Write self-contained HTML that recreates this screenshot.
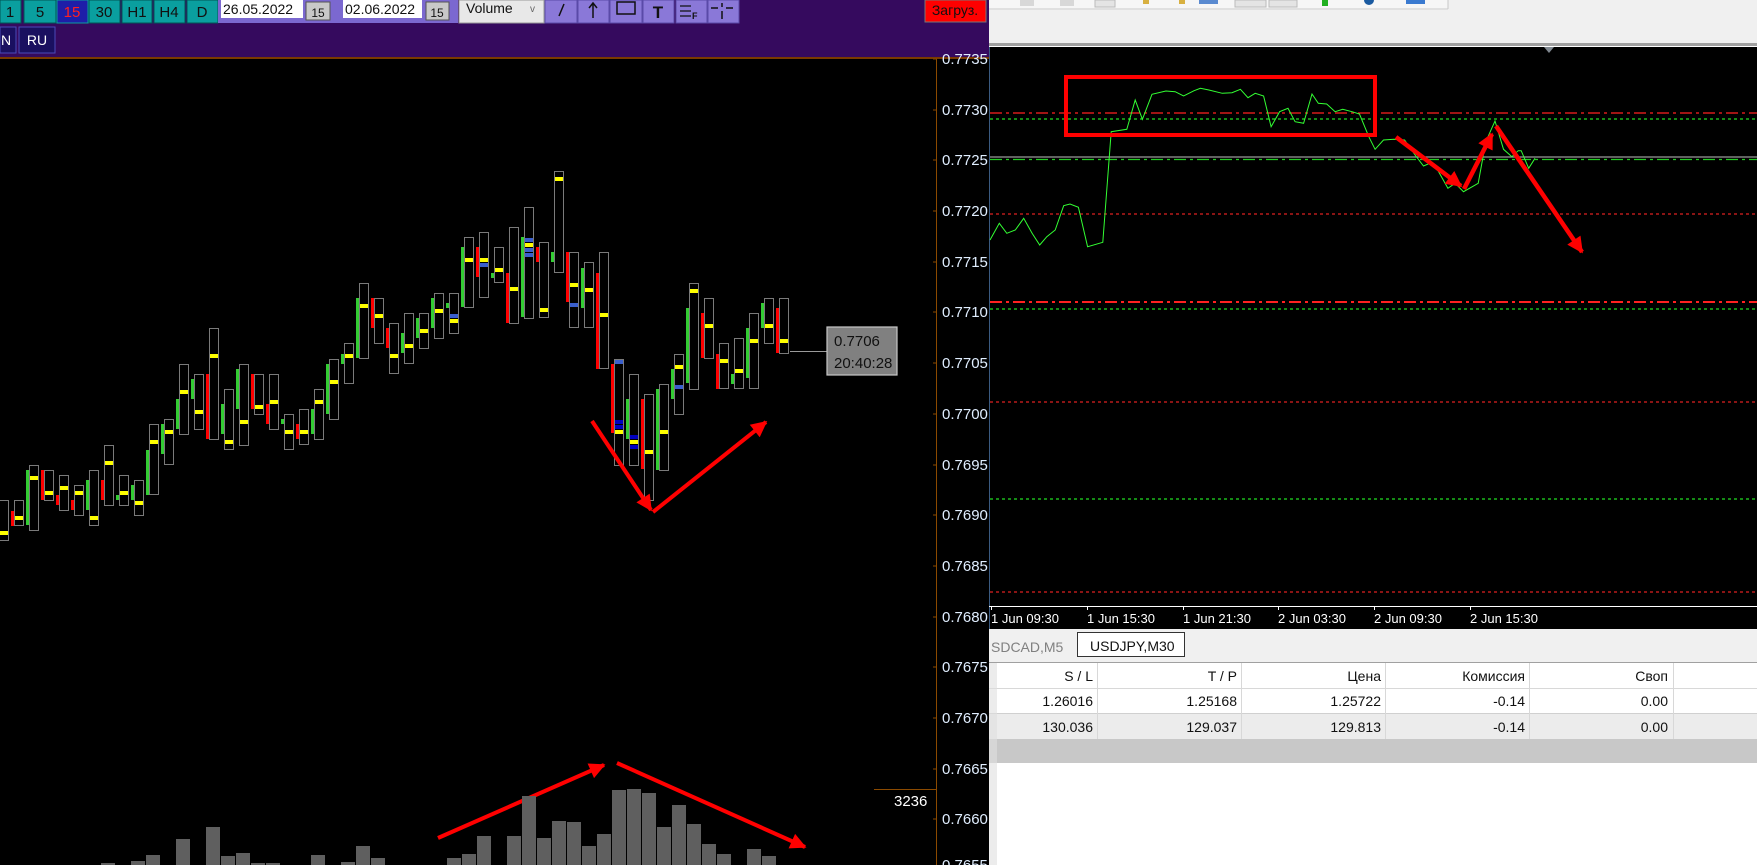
<!DOCTYPE html>
<html><head><meta charset="utf-8"><style>
html,body{margin:0;padding:0;background:#000;overflow:hidden}
svg{display:block}
text{font-family:"Liberation Sans","DejaVu Sans",sans-serif}
</style></head><body>
<svg width="1757" height="865" viewBox="0 0 1757 865" xmlns="http://www.w3.org/2000/svg">
<defs>
<marker id="ah" viewBox="0 0 10 10" refX="9" refY="5" markerWidth="22" markerHeight="16" markerUnits="userSpaceOnUse" orient="auto"><path d="M0,0 L10,5 L0,10 Z" fill="#ff0000"/></marker>
</defs>
<rect x="0" y="0" width="1757" height="865" fill="#000"/>
<!-- LEFT TOP PURPLE TOOLBAR -->
<rect x="0" y="0" width="989" height="57" fill="#350a5e"/>
<rect x="0" y="57" width="989" height="2" fill="#7a3a00"/>
<g font-size="15" fill="#111" text-anchor="middle">
<rect x="0" y="0" width="21" height="23" fill="#0a9f9f" stroke="#055" stroke-width="1"/><text x="10" y="17">1</text>
<rect x="24" y="0" width="32" height="23" fill="#0a9f9f" stroke="#055"/><text x="40" y="17">5</text>
<rect x="57" y="0" width="31" height="23" fill="#1e1ea8" stroke="#0a9f9f"/><text x="72" y="17" fill="#ff2020">15</text>
<rect x="89" y="0" width="31" height="23" fill="#0a9f9f" stroke="#055"/><text x="104" y="17">30</text>
<rect x="122" y="0" width="30" height="23" fill="#0a9f9f" stroke="#055"/><text x="137" y="17">H1</text>
<rect x="154" y="0" width="31" height="23" fill="#0a9f9f" stroke="#055"/><text x="169" y="17">H4</text>
<rect x="187" y="0" width="31" height="23" fill="#0a9f9f" stroke="#055"/><text x="202" y="17">D</text>
</g>
<rect x="218" y="0" width="121" height="23" fill="#7b68d0"/>
<rect x="221" y="0" width="82" height="18" fill="#fff"/>
<text x="223" y="14" font-size="14" fill="#111">26.05.2022</text>
<rect x="306" y="2" width="24" height="18" fill="#c8c8c8" stroke="#555"/>
<text x="318" y="17" font-size="12" fill="#111" text-anchor="middle">15</text>
<rect x="339" y="0" width="119" height="23" fill="#7b68d0"/>
<rect x="343" y="0" width="79" height="18" fill="#fff"/>
<text x="345" y="14" font-size="14" fill="#111">02.06.2022</text>
<rect x="426" y="2" width="23" height="18" fill="#c8c8c8" stroke="#555"/>
<text x="437" y="17" font-size="12" fill="#111" text-anchor="middle">15</text>
<rect x="459" y="0" width="85" height="23" fill="#e8e8e8" stroke="#999"/>
<text x="466" y="13" font-size="14" fill="#111">Volume</text>
<text x="530" y="12" font-size="10" fill="#666">v</text>
<g fill="#8a78d8" stroke="#5a4aa8">
<rect x="545" y="0" width="32" height="23"/><rect x="578" y="0" width="31" height="23"/><rect x="610" y="0" width="32" height="23"/><rect x="643" y="0" width="31" height="23"/><rect x="676" y="0" width="31" height="23"/><rect x="708" y="0" width="31" height="23"/>
</g>
<path d="M559,16 L564,4" stroke="#111" stroke-width="1.5"/>
<path d="M593,18 L593,4 M589,8 L593,3 L597,8" stroke="#111" stroke-width="1.5" fill="none"/>
<rect x="617" y="2" width="18" height="12" fill="none" stroke="#111" stroke-width="1.5"/>
<text x="658" y="18" font-size="17" font-weight="bold" fill="#111" text-anchor="middle">T</text>
<path d="M680,6 h11 M680,11 h11 M680,16 h11" stroke="#111" stroke-width="1.2"/><text x="692" y="19" font-size="9" font-weight="bold" fill="#111">F</text>
<path d="M711,8 h7 M726,8 h7 M722,3 v4 M722,11 v8" stroke="#111" stroke-width="1.5"/>
<rect x="925" y="0" width="61" height="22" fill="#ff0000" stroke="#777"/>
<text x="955" y="15" font-size="14" fill="#111" text-anchor="middle">Загруз.</text>
<rect x="0" y="27" width="16" height="26" fill="#1a1060" stroke="#4a4ab8"/><text x="1" y="45" font-size="14" fill="#fff">N</text>
<rect x="19" y="27" width="36" height="26" fill="#1a1060" stroke="#4a4ab8"/><text x="37" y="45" font-size="14" fill="#fff" text-anchor="middle">RU</text>
<!-- LEFT AXIS -->
<line x1="936.5" y1="59" x2="936.5" y2="865" stroke="#8b4a00" stroke-width="1"/>
<g font-size="15" fill="#e0eeff" stroke="none">
<text x="942" y="64">0.7735</text><text x="942" y="115">0.7730</text><text x="942" y="165">0.7725</text><text x="942" y="216">0.7720</text><text x="942" y="267">0.7715</text><text x="942" y="317">0.7710</text><text x="942" y="368">0.7705</text><text x="942" y="419">0.7700</text><text x="942" y="470">0.7695</text><text x="942" y="520">0.7690</text><text x="942" y="571">0.7685</text><text x="942" y="622">0.7680</text><text x="942" y="672">0.7675</text><text x="942" y="723">0.7670</text><text x="942" y="774">0.7665</text><text x="942" y="824">0.7660</text><text x="942" y="870">0.7655</text>
</g>
<g stroke="#8b4a00"><path d="M933,59h4M933,110h4M933,160h4M933,211h4M933,262h4M933,312h4M933,363h4M933,414h4M933,465h4M933,515h4M933,566h4M933,617h4M933,667h4M933,718h4M933,769h4M933,819h4"/></g>
<line x1="874" y1="789.5" x2="936" y2="789.5" stroke="#8b4a00"/>
<text x="894" y="806" font-size="15" fill="#fff">3236</text>
<!-- CANDLES -->
<g id="c">
<g fill="#33cc33">
<rect x="26" y="470" width="3" height="55"/><rect x="86" y="480" width="3" height="30"/><rect x="116" y="495" width="3" height="5"/><rect x="131" y="485" width="3" height="15"/><rect x="146" y="450" width="3" height="45"/><rect x="161" y="424" width="3" height="30"/><rect x="176" y="399" width="3" height="30"/><rect x="191" y="379" width="3" height="20"/><rect x="221" y="404" width="3" height="30"/><rect x="236" y="369" width="3" height="40"/><rect x="281" y="419" width="3" height="5"/><rect x="311" y="409" width="3" height="25"/><rect x="326" y="364" width="3" height="50"/><rect x="341" y="354" width="3" height="10"/><rect x="356" y="298" width="3" height="60"/><rect x="401" y="333" width="3" height="20"/><rect x="416" y="318" width="3" height="20"/><rect x="431" y="298" width="3" height="30"/><rect x="446" y="303" width="3" height="5"/><rect x="461" y="247" width="3" height="60"/><rect x="491" y="273" width="3" height="5"/><rect x="521" y="237" width="3" height="80"/><rect x="551" y="252" width="3" height="10"/><rect x="581" y="268" width="3" height="40"/><rect x="626" y="399" width="3" height="40"/><rect x="656" y="389" width="3" height="81"/><rect x="671" y="369" width="3" height="30"/><rect x="686" y="308" width="3" height="75"/><rect x="731" y="374" width="3" height="10"/><rect x="746" y="328" width="3" height="50"/><rect x="761" y="303" width="3" height="25"/>
</g>
<g fill="#ff0000">
<rect x="11" y="511" width="3" height="15"/><rect x="41" y="470" width="3" height="30"/><rect x="56" y="495" width="3" height="10"/><rect x="71" y="500" width="3" height="10"/><rect x="101" y="480" width="3" height="20"/><rect x="206" y="374" width="3" height="65"/><rect x="251" y="374" width="3" height="35"/><rect x="266" y="404" width="3" height="20"/><rect x="296" y="424" width="3" height="15"/><rect x="371" y="298" width="3" height="30"/><rect x="386" y="328" width="3" height="20"/><rect x="476" y="247" width="3" height="30"/><rect x="506" y="273" width="3" height="50"/><rect x="536" y="247" width="3" height="15"/><rect x="566" y="252" width="3" height="50"/><rect x="596" y="273" width="3" height="96"/><rect x="611" y="364" width="3" height="69"/><rect x="641" y="399" width="3" height="70"/><rect x="701" y="313" width="3" height="45"/><rect x="716" y="354" width="3" height="35"/><rect x="776" y="308" width="3" height="45"/>
</g>
<g fill="none" stroke="#7a7a7a" stroke-width="1">
<rect x="-0.5" y="500.5" width="9" height="40"/><rect x="14.5" y="500.5" width="9" height="25"/><rect x="29.5" y="465.5" width="9" height="65"/><rect x="44.5" y="470.5" width="9" height="30"/><rect x="59.5" y="475.5" width="9" height="35"/><rect x="74.5" y="485.5" width="9" height="30"/><rect x="89.5" y="470.5" width="9" height="55"/><rect x="104.5" y="445.5" width="9" height="60"/><rect x="119.5" y="475.5" width="9" height="30"/><rect x="134.5" y="480.5" width="9" height="35"/><rect x="149.5" y="424.5" width="9" height="70"/><rect x="164.5" y="419.5" width="9" height="45"/><rect x="179.5" y="364.5" width="9" height="70"/><rect x="194.5" y="374.5" width="9" height="55"/><rect x="209.5" y="328.5" width="9" height="111"/><rect x="224.5" y="389.5" width="9" height="60"/><rect x="239.5" y="364.5" width="9" height="81"/><rect x="254.5" y="374.5" width="9" height="40"/><rect x="269.5" y="374.5" width="9" height="55"/><rect x="284.5" y="414.5" width="9" height="35"/><rect x="299.5" y="409.5" width="9" height="35"/><rect x="314.5" y="389.5" width="9" height="50"/><rect x="329.5" y="359.5" width="9" height="60"/><rect x="344.5" y="343.5" width="9" height="40"/><rect x="359.5" y="283.5" width="9" height="75"/><rect x="374.5" y="298.5" width="9" height="45"/><rect x="389.5" y="323.5" width="9" height="50"/><rect x="404.5" y="313.5" width="9" height="50"/><rect x="419.5" y="313.5" width="9" height="35"/><rect x="434.5" y="293.5" width="9" height="45"/><rect x="449.5" y="293.5" width="9" height="40"/><rect x="464.5" y="237.5" width="9" height="70"/><rect x="479.5" y="232.5" width="9" height="65"/><rect x="494.5" y="247.5" width="9" height="35"/><rect x="509.5" y="227.5" width="9" height="96"/><rect x="524.5" y="207.5" width="9" height="111"/><rect x="539.5" y="242.5" width="9" height="75"/><rect x="554.5" y="171.5" width="9" height="101"/><rect x="569.5" y="252.5" width="9" height="75"/><rect x="584.5" y="262.5" width="9" height="65"/><rect x="599.5" y="252.5" width="9" height="116"/><rect x="614.5" y="359.5" width="9" height="106"/><rect x="629.5" y="374.5" width="9" height="91"/><rect x="644.5" y="394.5" width="9" height="106"/><rect x="659.5" y="384.5" width="9" height="86"/><rect x="674.5" y="354.5" width="9" height="60"/><rect x="689.5" y="283.5" width="9" height="106"/><rect x="704.5" y="298.5" width="9" height="60"/><rect x="719.5" y="343.5" width="9" height="45"/><rect x="734.5" y="338.5" width="9" height="50"/><rect x="749.5" y="313.5" width="9" height="75"/><rect x="764.5" y="298.5" width="9" height="45"/><rect x="779.5" y="298.5" width="9" height="55"/>
</g>
<g fill="#3a5fcd">
<rect x="450" y="314" width="8" height="4"/><rect x="480" y="263" width="8" height="4"/><rect x="525" y="238" width="8" height="4"/><rect x="525" y="248" width="8" height="4"/><rect x="525" y="253" width="8" height="4"/><rect x="570" y="303" width="8" height="4"/><rect x="615" y="360" width="8" height="4"/><rect x="675" y="385" width="8" height="4"/>
</g>
<g fill="#0000c0"><rect x="615" y="420" width="8" height="4"/><rect x="615" y="425" width="8" height="4"/><rect x="630" y="435" width="8" height="4"/><rect x="630" y="445" width="8" height="4"/></g>
<g fill="#ffff00">
<rect x="0" y="531" width="8" height="4"/><rect x="15" y="516" width="8" height="4"/><rect x="30" y="476" width="8" height="4"/><rect x="45" y="491" width="8" height="4"/><rect x="60" y="486" width="8" height="4"/><rect x="75" y="491" width="8" height="4"/><rect x="90" y="516" width="8" height="4"/><rect x="105" y="461" width="8" height="4"/><rect x="120" y="491" width="8" height="4"/><rect x="135" y="501" width="8" height="4"/><rect x="150" y="440" width="8" height="4"/><rect x="165" y="430" width="8" height="4"/><rect x="180" y="390" width="8" height="4"/><rect x="195" y="410" width="8" height="4"/><rect x="210" y="354" width="8" height="4"/><rect x="225" y="440" width="8" height="4"/><rect x="240" y="420" width="8" height="4"/><rect x="255" y="405" width="8" height="4"/><rect x="270" y="400" width="8" height="4"/><rect x="285" y="430" width="8" height="4"/><rect x="300" y="430" width="8" height="4"/><rect x="315" y="400" width="8" height="4"/><rect x="330" y="380" width="8" height="4"/><rect x="345" y="354" width="8" height="4"/><rect x="360" y="304" width="8" height="4"/><rect x="375" y="314" width="8" height="4"/><rect x="390" y="354" width="8" height="4"/><rect x="405" y="344" width="8" height="4"/><rect x="420" y="329" width="8" height="4"/><rect x="435" y="309" width="8" height="4"/><rect x="450" y="319" width="8" height="4"/><rect x="465" y="258" width="8" height="4"/><rect x="480" y="258" width="8" height="4"/><rect x="495" y="268" width="8" height="4"/><rect x="510" y="287" width="8" height="4"/><rect x="525" y="243" width="8" height="4"/><rect x="540" y="308" width="8" height="4"/><rect x="555" y="177" width="8" height="4"/><rect x="570" y="283" width="8" height="4"/><rect x="585" y="288" width="8" height="4"/><rect x="600" y="313" width="8" height="4"/><rect x="615" y="430" width="8" height="4"/><rect x="630" y="440" width="8" height="4"/><rect x="645" y="450" width="8" height="4"/><rect x="660" y="430" width="8" height="4"/><rect x="675" y="365" width="8" height="4"/><rect x="690" y="289" width="8" height="4"/><rect x="705" y="324" width="8" height="4"/><rect x="720" y="359" width="8" height="4"/><rect x="735" y="369" width="8" height="4"/><rect x="750" y="339" width="8" height="4"/><rect x="765" y="324" width="8" height="4"/><rect x="780" y="339" width="8" height="4"/>
</g>
</g>
<line x1="790" y1="351.5" x2="827" y2="351.5" stroke="#9a9a9a"/>
<rect x="827" y="327" width="70" height="48" fill="#808080" stroke="#c8c8c8" stroke-width="1.2"/>
<text x="834" y="346" font-size="15" fill="#111">0.7706</text>
<text x="834" y="368" font-size="15" fill="#111">20:40:28</text>
<!-- arrows on candles -->
<g stroke="#ff0000" stroke-width="4" fill="none" marker-end="url(#ah)">
<line x1="592" y1="421" x2="651" y2="510"/>
<line x1="653" y1="512" x2="766" y2="422"/>
<line x1="438" y1="838" x2="604" y2="765"/>
<line x1="617" y1="763" x2="805" y2="847"/>
</g>
<!-- VOLUME -->
<g fill="#5f5f5f">
<rect x="101" y="863" width="14" height="2"/><rect x="131" y="861" width="14" height="4"/><rect x="146" y="855" width="14" height="10"/><rect x="176" y="839" width="14" height="26"/><rect x="206" y="827" width="14" height="38"/><rect x="221" y="856" width="14" height="9"/><rect x="236" y="853" width="14" height="12"/><rect x="251" y="863" width="14" height="2"/><rect x="266" y="863" width="14" height="2"/><rect x="311" y="855" width="14" height="10"/><rect x="341" y="862" width="14" height="3"/><rect x="356" y="846" width="14" height="19"/><rect x="371" y="858" width="14" height="7"/><rect x="447" y="858" width="14" height="7"/><rect x="462" y="854" width="14" height="11"/><rect x="477" y="836" width="14" height="29"/><rect x="507" y="836" width="14" height="29"/><rect x="522" y="796" width="14" height="69"/><rect x="537" y="838" width="14" height="27"/><rect x="552" y="821" width="14" height="44"/><rect x="567" y="822" width="14" height="43"/><rect x="582" y="846" width="14" height="19"/><rect x="597" y="834" width="14" height="31"/><rect x="612" y="790" width="14" height="75"/><rect x="627" y="789" width="14" height="76"/><rect x="642" y="793" width="14" height="72"/><rect x="657" y="827" width="14" height="38"/><rect x="672" y="805" width="14" height="60"/><rect x="687" y="824" width="14" height="41"/><rect x="702" y="844" width="14" height="21"/><rect x="717" y="854" width="14" height="11"/><rect x="747" y="849" width="14" height="16"/><rect x="762" y="856" width="14" height="9"/>
</g>
<!-- RIGHT PANEL -->
<rect x="989" y="0" width="768" height="43" fill="#f0f0f0"/>
<rect x="989" y="0" width="459" height="8" fill="#f6f6f6"/>
<line x1="989" y1="9" x2="1448" y2="9" stroke="#d0d0d0"/>
<line x1="1448" y1="0" x2="1448" y2="9" stroke="#c8c8c8"/>
<g>
<rect x="1020" y="0" width="14" height="6" fill="#d8d8d8"/><rect x="1060" y="0" width="14" height="6" fill="#d8d8d8"/><rect x="1095" y="0" width="20" height="7" fill="#e4e4e4" stroke="#bbb"/><rect x="1143" y="0" width="6" height="4" fill="#d8b040"/><rect x="1179" y="0" width="6" height="4" fill="#d8b040"/><rect x="1199" y="0" width="19" height="4" fill="#5a8ad0"/><rect x="1235" y="0" width="31" height="7" fill="#e4e4e4" stroke="#bbb"/><rect x="1269" y="0" width="28" height="7" fill="#e4e4e4" stroke="#bbb"/><rect x="1322" y="0" width="6" height="6" fill="#20b020"/><circle cx="1369" cy="0" r="5" fill="#1a5aa0"/><rect x="1406" y="0" width="19" height="4" fill="#3a7ad0"/>
</g>
<rect x="989" y="43" width="768" height="3" fill="#a0a0a0"/>
<rect x="989" y="46" width="768" height="1" fill="#fff"/>
<rect x="989" y="47" width="768" height="582" fill="#000"/>
<line x1="989.5" y1="47" x2="989.5" y2="629" stroke="#3a5a80"/>
<path d="M1544,47 L1554,47 L1549,53 Z" fill="#808890"/>
<g fill="none" stroke-width="1.3">
<line x1="990" y1="113" x2="1757" y2="113" stroke="#ff2020" stroke-dasharray="12,4,3,4"/>
<line x1="990" y1="119" x2="1757" y2="119" stroke="#22dd22" stroke-dasharray="3,3"/>
<line x1="990" y1="157" x2="1757" y2="157" stroke="#9a9a9a"/>
<line x1="990" y1="159.5" x2="1757" y2="159.5" stroke="#22cc22" stroke-dasharray="12,4,3,4"/>
<line x1="990" y1="214" x2="1757" y2="214" stroke="#dd2020" stroke-dasharray="3,3"/>
<line x1="990" y1="302" x2="1757" y2="302" stroke="#ff2020" stroke-width="2" stroke-dasharray="12,4,3,4"/>
<line x1="990" y1="309" x2="1757" y2="309" stroke="#22dd22" stroke-dasharray="3,3"/>
<line x1="990" y1="402" x2="1757" y2="402" stroke="#dd2020" stroke-dasharray="3,3"/>
<line x1="990" y1="499" x2="1757" y2="499" stroke="#22dd22" stroke-dasharray="3,3"/>
<line x1="990" y1="592" x2="1757" y2="592" stroke="#dd2020" stroke-dasharray="3,3"/>
</g>
<polyline fill="none" stroke="#33ff33" stroke-width="1" points="990,240 999.3,223.3 1006.8,233.3 1015.3,230 1023.7,218.3 1032.1,233.3 1039.7,245 1046.8,236.7 1055.2,230 1063.7,205.7 1070,204 1078.4,207.3 1087.6,246.7 1102.8,242.3 1111.2,131.7 1126.8,129.3 1135.2,100 1142.4,119.3 1152,94.3 1165.9,91 1175.2,91.7 1183.6,96 1194.1,90.7 1200.4,88.3 1208.9,90 1222.3,93.3 1232,92.7 1240.4,89.3 1248,97.7 1255.2,93.3 1263.6,96 1271.1,126.7 1279.6,111.7 1288,108.3 1295.1,121.7 1303.6,123.3 1312,94 1318.3,103.3 1326.7,104 1335.1,111.7 1342.7,109.3 1352,111.7 1359.5,114 1368.8,136.7 1375.1,149.3 1383.5,140 1394,139.3 1404.6,140 1415.1,155 1423.5,166 1429.8,163.3 1438.2,171 1447.9,188.3 1455.1,183.3 1463.5,191.7 1478.2,183.3 1485.8,141.7 1495,121 1503.5,149.3 1511.9,156.7 1518.2,150.7 1521.2,150.7 1528.7,168.3 1535,158.3"/>
<rect x="1066" y="77" width="309" height="58" fill="none" stroke="#ff0000" stroke-width="4"/>
<g stroke="#ff0000" stroke-width="4.5" fill="none" marker-end="url(#ah)">
<line x1="1396" y1="137" x2="1461" y2="186"/>
<line x1="1464" y1="189" x2="1492" y2="134"/>
<line x1="1496" y1="126" x2="1582" y2="252"/>
</g>
<line x1="989" y1="606.5" x2="1757" y2="606.5" stroke="#fff"/>
<g stroke="#fff"><path d="M991.5,606v4M1087.5,606v4M1183.5,606v4M1278.5,606v4M1374.5,606v4M1470.5,606v4"/></g>
<g font-size="13" fill="#fff">
<text x="991" y="623">1 Jun 09:30</text><text x="1087" y="623">1 Jun 15:30</text><text x="1183" y="623">1 Jun 21:30</text><text x="1278" y="623">2 Jun 03:30</text><text x="1374" y="623">2 Jun 09:30</text><text x="1470" y="623">2 Jun 15:30</text>
</g>
<!-- tabs -->
<rect x="989" y="629" width="768" height="33" fill="#f0f0f0"/>
<text x="991" y="652" font-size="14" fill="#808080">SDCAD,M5</text>
<rect x="1077.5" y="632.5" width="107" height="24" fill="#fff" stroke="#333"/>
<text x="1090" y="651" font-size="14" fill="#111">USDJPY,M30</text>
<line x1="989" y1="662.5" x2="1757" y2="662.5" stroke="#a0a0a0"/>
<!-- table -->
<rect x="989" y="663" width="768" height="25" fill="#fff"/>
<rect x="989" y="688" width="768" height="25" fill="#fff"/>
<rect x="989" y="713" width="768" height="26" fill="#ececec"/>
<rect x="989" y="739" width="768" height="24" fill="#c8c8c8"/>
<rect x="989" y="763" width="768" height="102" fill="#fff"/>
<line x1="989" y1="688.5" x2="1757" y2="688.5" stroke="#d8d8d8"/>
<line x1="989" y1="713.5" x2="1757" y2="713.5" stroke="#d0d0d0"/>
<g stroke="#d8d8d8"><path d="M1097.5,663v76M1241.5,663v76M1385.5,663v76M1529.5,663v76M1673.5,663v76"/></g>
<g font-size="14" fill="#111" text-anchor="end">
<text x="1093" y="681">S / L</text><text x="1237" y="681">T / P</text><text x="1381" y="681">Цена</text><text x="1525" y="681">Комиссия</text><text x="1668" y="681">Своп</text>
<text x="1093" y="706">1.26016</text><text x="1237" y="706">1.25168</text><text x="1381" y="706">1.25722</text><text x="1525" y="706">-0.14</text><text x="1668" y="706">0.00</text>
<text x="1093" y="732">130.036</text><text x="1237" y="732">129.037</text><text x="1381" y="732">129.813</text><text x="1525" y="732">-0.14</text><text x="1668" y="732">0.00</text>
</g>
<rect x="989" y="663" width="8" height="202" fill="#e0e0e0" opacity="0.6"/>
</svg>
</body></html>
